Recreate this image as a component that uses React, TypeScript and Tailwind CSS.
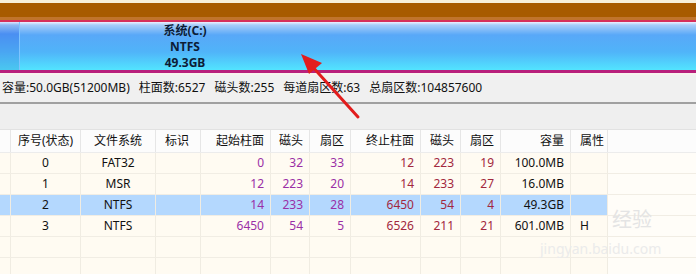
const cols = [
  { w: 11, label: "", align: "center" },
  { w: 70, label: "序号(状态)", align: "center" },
  { w: 75, label: "文件系统", align: "center" },
  { w: 45, label: "标识", align: "left" },
  { w: 70, label: "起始柱面", align: "right" },
  { w: 39, label: "磁头", align: "right" },
  { w: 41, label: "扇区", align: "right" },
  { w: 70, label: "终止柱面", align: "right" },
  { w: 40, label: "磁头", align: "right" },
  { w: 40, label: "扇区", align: "right" },
  { w: 70, label: "容量", align: "right" },
  { w: 37, label: "属性", align: "left" },
];

const rows = [
  ["", "0", "FAT32", "", "0", "32", "33", "12", "223", "19", "100.0MB", ""],
  ["", "1", "MSR", "", "12", "223", "20", "14", "233", "27", "16.0MB", ""],
  ["", "2", "NTFS", "", "14", "233", "28", "6450", "54", "4", "49.3GB", ""],
  ["", "3", "NTFS", "", "6450", "54", "5", "6526", "211", "21", "601.0MB", "H"],
  ["", "", "", "", "", "", "", "", "", "", "", ""],
  ["", "", "", "", "", "", "", "", "", "", "", ""],
];

const alignCls: Record<string, string> = {
  center: "justify-center",
  left: "justify-start pl-[9px]",
  right: "justify-end pr-[6px]",
};

function cellColor(i: number) {
  if (i >= 4 && i <= 6) return "text-[#9a2fa6]";
  if (i >= 7 && i <= 9) return "text-[#a2283e]";
  return "text-[#111]";
}

export default function App() {
  return (
    <div
      className="relative w-[696px] h-[274px] overflow-hidden bg-[#f0f0f0] text-[12px] text-[#111]"
      style={{ fontFamily: "'Noto Sans', 'Noto Sans CJK SC', sans-serif" }}
    >
      {/* disk map */}
      <div className="h-[3px] bg-[#f7f0db]" />
      <div className="h-[14px] bg-[#a75b00]" />
      <div className="h-[3px] bg-[#c0742c]" />
      <div className="h-[2px] bg-[#d6305a]" />
      <div className="flex h-[48px]">
        <div className="w-[20px] bg-[linear-gradient(#dfe6ff_0px,#8cb8f4_3px,#4a8ff2_12px,#4aa6f2_30px,#4ac8f0_48px)] border-r border-[#7ec4ff]" />
        <div className="flex-1 bg-[linear-gradient(#eef0ff_0px,#a8cdf8_3px,#58a8f8_13px,#50b4f9_30px,#52e4ff_48px)]">
          <div className="w-[330px] flex flex-col items-center pt-[1px] font-bold text-[12px] leading-[16px] text-[#0c1c36]">
            <span>系统(C:)</span>
            <span>NTFS</span>
            <span>49.3GB</span>
          </div>
        </div>
      </div>
      <div className="h-[3px] bg-[#b8207c]" />
      <div className="h-[2px] bg-[#f7f2ee]" />

      {/* info bar */}
      <div className="h-[27px] flex items-center gap-[9px] pl-[2px] pb-[1px] whitespace-nowrap">
        <span>容量:50.0GB(51200MB)</span>
        <span>柱面数:6527</span>
        <span>磁头数:255</span>
        <span>每道扇区数:63</span>
        <span>总扇区数:104857600</span>
      </div>
      <div className="h-[2px] bg-[#a0a0a0]" />
      <div className="h-[25px] bg-[#efefef]" />

      {/* table */}
      <div className="bg-[#fffdf8] border-t border-[#e2e2e2]">
        <div className="flex h-[23px] bg-[#fcfcfc] border-b border-[#ececec]">
          {cols.map((c, i) => (
            <div
              key={i}
              style={{ width: c.w }}
              className={`flex items-center shrink-0 border-r border-[#e6e6e6] ${alignCls[c.align]}`}
            >
              {c.label}
            </div>
          ))}
        </div>
        {rows.map((r, ri) => (
          <div key={ri} className="flex h-[21px] border-b border-[#f1ede4]">
            {cols.map((c, i) => (
              <div
                key={i}
                style={{ width: c.w }}
                className={`flex items-center shrink-0 border-r border-[#f0ece2] ${alignCls[c.align]} ${cellColor(i)} ${
                  ri === 2 ? "bg-[#b4d8fe]" : "bg-[#fffbf2]"
                }`}
              >
                {r[i]}
              </div>
            ))}
          </div>
        ))}
      </div>

      {/* red arrow */}
      <svg className="absolute left-0 top-0 pointer-events-none" width="696" height="274">
        <line x1="358" y1="117" x2="310" y2="64" stroke="#e21d1d" strokeWidth="3" strokeLinecap="round" />
        <polygon points="301,54 322,63 309,74" fill="#e21d1d" />
      </svg>

      {/* watermark */}
      <span className="absolute left-[612px] top-[210px] text-[20px] leading-none text-[#e4e4e4] pointer-events-none">
        经验
      </span>
      <span className="absolute left-[540px] top-[242px] text-[14px] leading-none text-[#ebebeb] pointer-events-none">
        jingyan.baidu.com
      </span>
    </div>
  );
}
